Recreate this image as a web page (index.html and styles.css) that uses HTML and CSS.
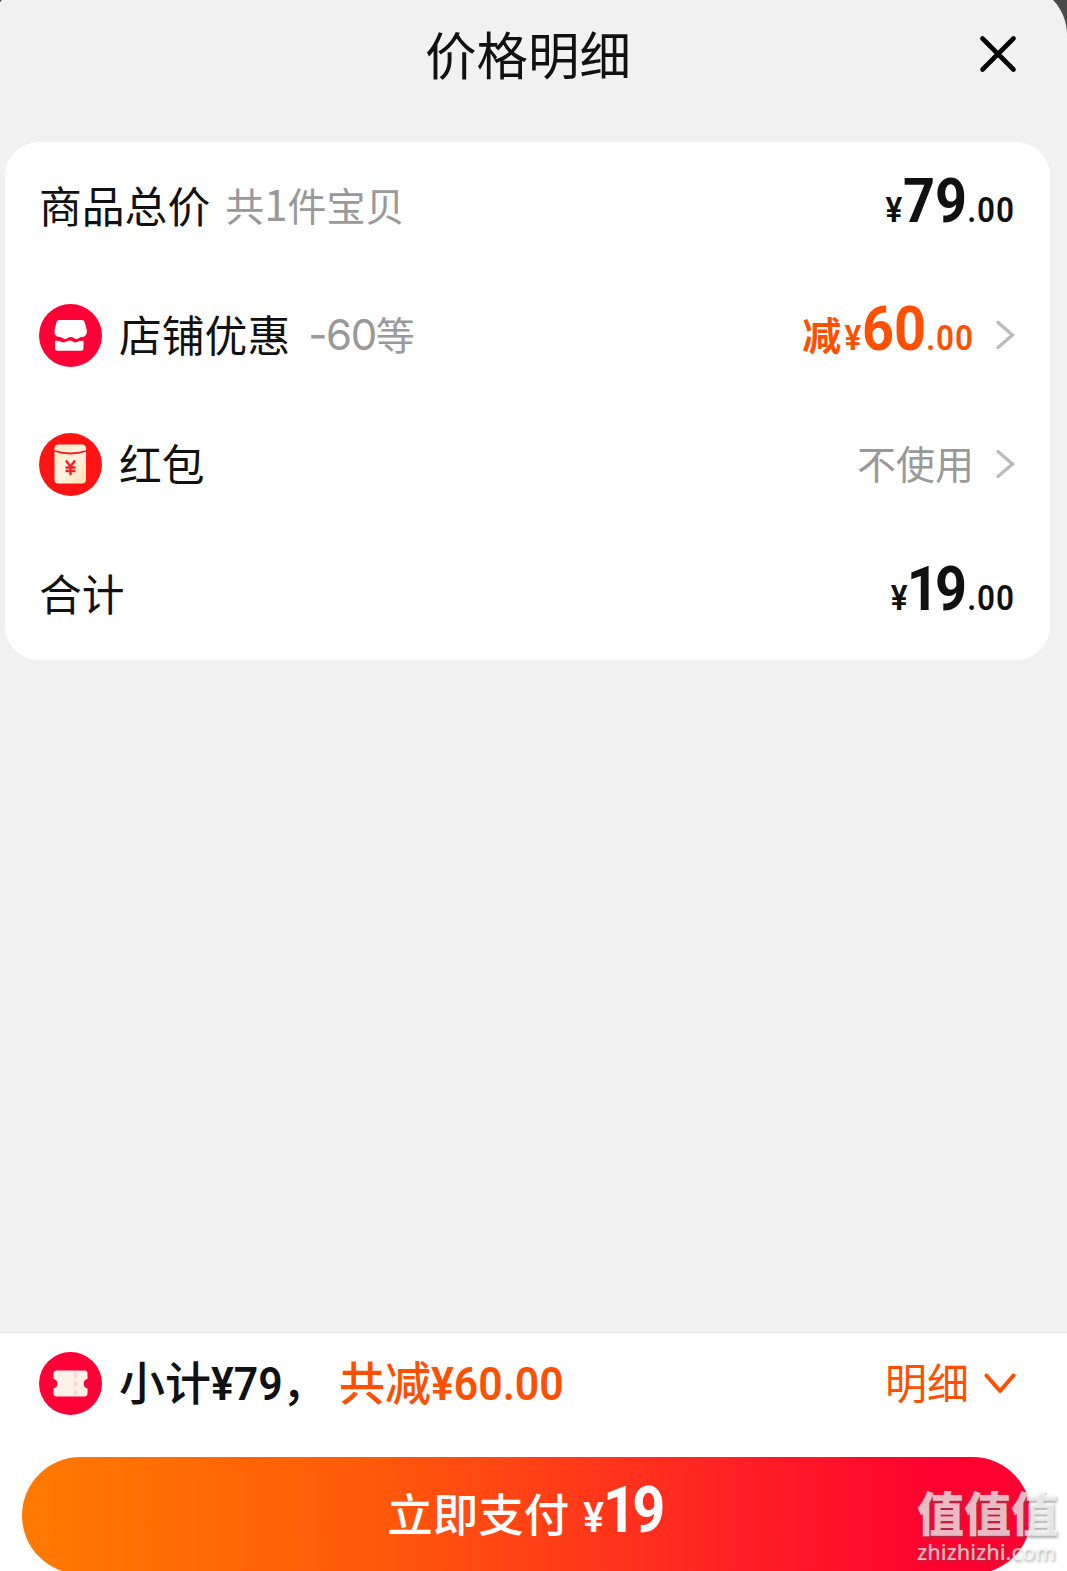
FILE: index.html
```html
<!DOCTYPE html>
<html lang="zh-CN">
<head>
  <meta charset="UTF-8">
  <meta name="viewport" content="width=device-width, initial-scale=1.0">
  <title>价格明细</title>
  <link rel="stylesheet" href="styles.css">
</head>
<body>
  <div class="page">
    <div class="sheet">
      <header class="header">
        <h1>价格明细</h1>
        <button class="close" aria-label="关闭">
          <svg width="38" height="38" viewBox="0 0 38 38">
            <path d="M3.5 3.5L34.5 34.5M34.5 3.5L3.5 34.5" />
          </svg>
        </button>
      </header>

      <!-- Price rows -->
      <section class="card">
        <div class="row">
          <span class="label">商品总价</span>
          <span class="hint">共<span class="count">1</span>件宝贝</span>
          <span class="amount"><span class="price">¥<b>79</b>.00</span></span>
        </div>
        <div class="row">
          <svg class="icon" viewBox="0 0 63 63">
            <circle cx="31.5" cy="31.5" r="31.5" fill="#ff0036" />
            <path fill="#fff" d="M20 16h23q2 0 2.700 2l2 7.500c.8 4.500-1.200 7.500-4.700 7.500-2.300 0-3.600 2-5.600 2s-3.200-2-5.700-2-3.500 2-5.500 2-3.500-2-5.900-2c-3.500 0-5.500-3-4.600-7.500l1.800-7.500q.5-2 2.500-2z" />
            <path fill="#fff" d="M16 36.800c3 .2 4.700 0 6 .9 2.500 1.300 4 1 6.400-.6 1.600-.9 2.600-.9 4.200 0 2.400 1.600 4.400 1.700 6.800.5 1.200-.8 2.600-.6 5.100-.8v7.500q0 2.500-2.500 2.500h-23.500q-2.500 0-2.500-2.500z" />
          </svg>
          <span class="label">店铺优惠</span>
          <span class="hint wide"><span class="digits">-60</span>等</span>
          <span class="amount discount">减<span class="price">¥<b>60</b>.00</span></span>
          <svg class="arrow" width="19" height="30" viewBox="0 0 19 30">
            <path d="M2 2.500L16.500 15L2 27.500" />
          </svg>
        </div>
        <div class="row">
          <svg class="icon" viewBox="0 0 63 63">
            <defs>
              <linearGradient id="packet" x1="0" y1="0" x2="1" y2="1">
                <stop offset="0" stop-color="#ffe9c4" />
                <stop offset=".5" stop-color="#fff4e0" />
                <stop offset="1" stop-color="#ffe0b0" />
              </linearGradient>
            </defs>
            <circle cx="31.5" cy="31.5" r="31.5" fill="#ff1414" />
            <rect x="15.500" y="11.500" width="31.500" height="39" rx="4" fill="url(#packet)" />
            <path d="M15.500 18Q31.500 23 47 18" fill="none" stroke="#f01a1a" stroke-width="1.800" />
            <path d="M27 27.500L31.500 33.500L36 27.500M31.500 33.500V42M26.500 34.500H36.500M26.500 38H36.500" fill="none" stroke="#e8262a" stroke-width="2.400" />
          </svg>
          <span class="label">红包</span>
          <span class="amount unused">不使用</span>
          <svg class="arrow" width="19" height="30" viewBox="0 0 19 30">
            <path d="M2 2.500L16.500 15L2 27.500" />
          </svg>
        </div>
        <div class="row">
          <span class="label">合计</span>
          <span class="amount"><span class="price tight">¥<b>19</b>.00</span></span>
        </div>
      </section>
    </div>

    <!-- Bottom bar -->
    <footer class="footer">
      <div class="summary">
        <svg class="icon" viewBox="0 0 63 63">
          <circle cx="31.5" cy="31.5" r="31.5" fill="#ff0036" />
          <path fill="#fff0e8" d="M17.500 18.500h28q3 0 3 3v5.500a4.800 4.800 0 0 0 0 9.400v5.100q0 3-3 3h-28q-3 0-3-3v-5.100a4.800 4.800 0 0 0 0-9.400v-5.500q0-3 3-3z" />
          <path d="M36.500 20.500V44" stroke="#f8d5cf" stroke-width="3" stroke-dasharray="5 4" />
        </svg>
        <span class="subtotal">小计<span class="sum">¥79</span>，</span>
        <span class="saved">共减<span class="sum">¥60.00</span></span>
        <span class="toggle">明细</span>
        <svg class="down" width="32" height="22" viewBox="0 0 32 22">
          <path d="M2.500 2.500L16 18L29.500 2.500" />
        </svg>
      </div>
      <button class="pay"><span>立即支付</span><span class="price tight">¥<b>19</b></span></button>
    </footer>

    <div class="watermark">
      <strong>值值值</strong>
      <span>zhizhizhi.com</span>
    </div>
  </div>
</body>
</html>
```

FILE: styles.css
```css
* {
  box-sizing: border-box;
}
body {
  margin: 0;
  background: #4a4a4a;
  color: #111;
  font-family: "Noto Sans CJK SC", sans-serif;
}
button {
  border: none;
  padding: 0;
  background: none;
  color: inherit;
  font-family: inherit;
}
.page {
  position: relative;
  display: flex;
  flex-direction: column;
  height: 1571px;
  overflow: hidden;
}
.sheet {
  flex: 1;
  margin: -16px 0 0 -12px;
  padding: 16px 0 0 12px;
  border-radius: 51px 51px 0 0;
  background: #f1f1f1;
}
.header {
  display: flex;
  align-items: center;
  height: 142px;
  padding: 0 50px 34px 0;
}
h1 {
  flex: 1;
  margin: 0;
  padding: 0 0 2px 77px;
  font-size: 51.5px;
  font-weight: 400;
  line-height: 60px;
  text-align: center;
}
.close {
  display: flex;
}
.close path {
  fill: none;
  stroke: #000;
  stroke-width: 4.6;
  stroke-linecap: round;
}

/* Card */
.card {
  margin: 0 17px 0 5px;
  border-radius: 34px;
  background: #fff;
}
.row {
  display: flex;
  align-items: center;
  height: 129.4px;
  padding: 0 35px 0 34px;
  font-size: 42.8px;
  line-height: 60px;
  white-space: nowrap;
}
.row .icon {
  margin-bottom: 2px;
}
.icon {
  flex: none;
  width: 63px;
  height: 63px;
  margin-right: 17px;
}
.label,
.hint,
.unused {
  margin-bottom: 6px;
}
.hint {
  margin-left: 15px;
  color: #999;
  font-size: 39px;
}
.hint.wide {
  margin-left: 18px;
}
.count {
  font-size: 42px;
  line-height: 0;
}
.digits {
  font-family: Inter, sans-serif;
  font-size: 42px;
  line-height: 0;
  letter-spacing: -1.4px;
}
.amount {
  margin-left: auto;
}
.price {
  display: inline-block;
  font-family: Roboto, sans-serif;
  font-size: 35px;
  font-weight: 600;
  letter-spacing: 1px;
  transform: scaleX(0.9);
  transform-origin: right;
}
.price b {
  font-size: 62px;
  font-weight: 700;
  line-height: 0;
  letter-spacing: 0;
}
.price.tight b {
  margin: 0 4px 0 -2px;
  letter-spacing: -4px;
}
.discount {
  color: #ff5000;
  font-size: 39px;
  font-weight: 600;
}
.discount .price {
  margin-left: -11px;
}
.unused {
  color: #999;
  font-size: 39px;
}
.arrow {
  margin: 0 0 3px 22px;
}
.arrow path {
  fill: none;
  stroke: #bbb;
  stroke-width: 3.4;
  stroke-linecap: round;
}

/* Footer */
.footer {
  height: 239px;
  border-top: 1px solid #e2e2e2;
  background: #fff;
}
.summary {
  display: flex;
  align-items: center;
  height: 101px;
  margin-bottom: 23px;
  padding: 0 51px 0 39px;
  font-size: 46px;
  font-weight: 500;
  line-height: 60px;
  white-space: nowrap;
}
.subtotal,
.saved {
  margin-bottom: 4px;
}
.sum {
  display: inline-block;
  margin-right: -6px;
  font-family: Roboto, sans-serif;
  font-weight: 600;
  transform: scaleX(0.93);
  transform-origin: left;
}
.saved {
  margin-left: 11px;
  color: #ff5000;
}
.toggle {
  margin: 0 0 6px auto;
  color: #ff5000;
  font-size: 42px;
  font-weight: 400;
}
.down {
  margin-left: 15px;
}
.down path {
  fill: none;
  stroke: #ff5000;
  stroke-width: 4;
  stroke-linecap: round;
  stroke-linejoin: round;
}
.pay {
  display: flex;
  justify-content: center;
  align-items: baseline;
  width: 1009px;
  height: 117px;
  margin-left: 22px;
  border-radius: 59px;
  background: linear-gradient(90deg, #ff7a00, #ff5a0a 35%, #ff2a20 65%, #ff0030 92%);
  color: #fff;
  font-size: 45.5px;
  font-weight: 500;
  line-height: 110px;
}
.pay .price {
  margin-left: 5px;
  font-size: 43px;
}
.pay .price b {
  font-size: 64px;
}

.watermark {
  position: absolute;
  right: 9px;
  bottom: 6px;
  display: flex;
  flex-direction: column;
  color: rgba(255, 255, 255, 0.7);
  text-shadow: 1px 2px 3px rgba(90, 90, 90, 0.5);
}
.watermark strong {
  font-size: 47px;
  font-weight: 900;
  line-height: 57px;
}
.watermark span {
  font-family: "Noto Sans", sans-serif;
  font-size: 21.5px;
  font-weight: 500;
  line-height: 26px;
}
```
